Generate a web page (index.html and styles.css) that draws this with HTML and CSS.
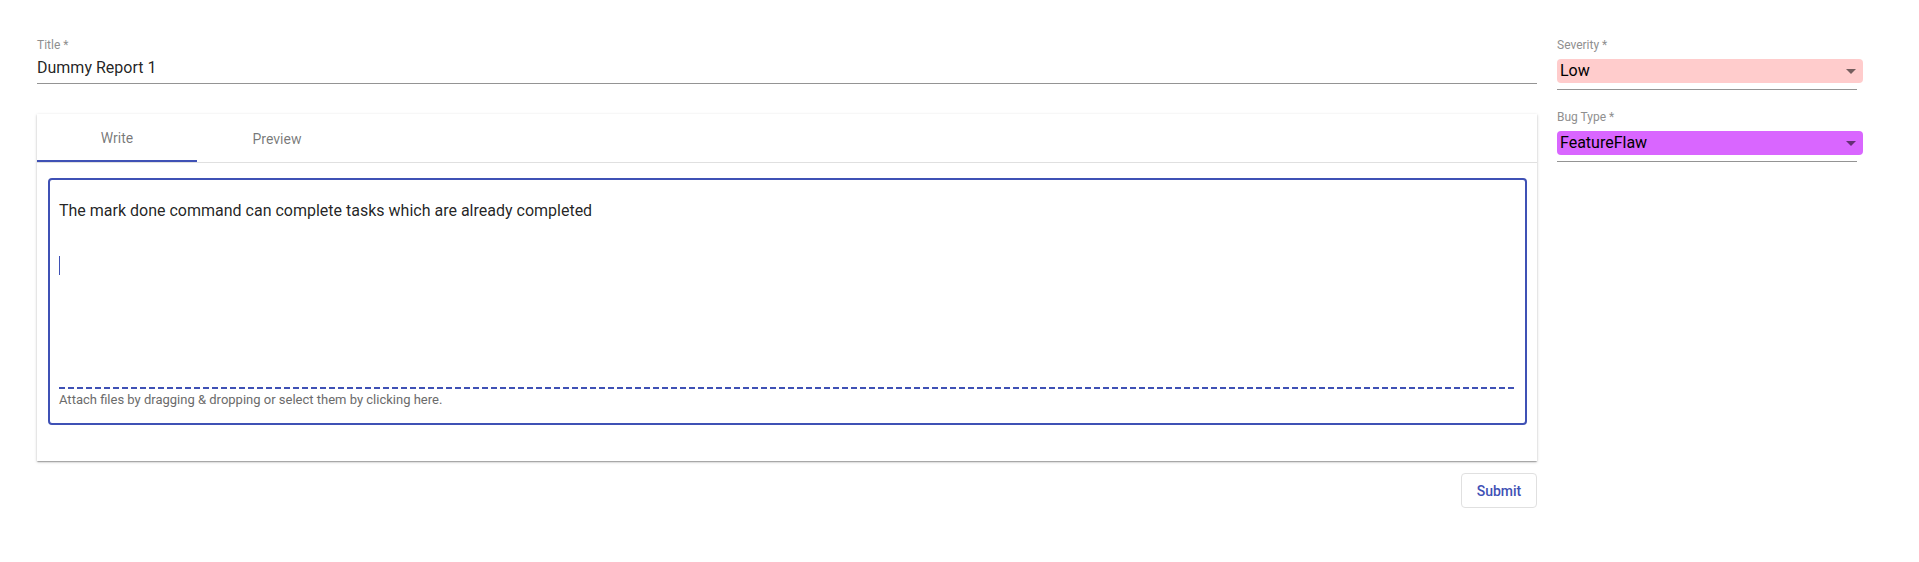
FILE: index.html
```html
<!DOCTYPE html>
<html lang="en">
<head>
<meta charset="utf-8">
<title>Report</title>
<link rel="stylesheet" href="styles.css">
</head>
<body>
<div class="page">
  <div class="main">
    <div class="field title-field">
      <label class="label">Title *</label>
      <div class="input">Dummy Report 1</div>
    </div>
    <div class="card">
      <div class="tabs">
        <div class="tab active">Write</div>
        <div class="tab">Preview</div>
      </div>
      <div class="editor">
        <div class="textarea">
          <div class="line">The mark done command can complete tasks which are already completed</div>
          <div class="line"></div>
          <div class="line"><span class="caret"></span></div>
        </div>
        <div class="dash"></div>
        <div class="attach">Attach files by dragging &amp; dropping or select them by clicking here.</div>
      </div>
    </div>
    <div class="actions">
      <button class="submit">Submit</button>
    </div>
  </div>
  <div class="side">
    <div class="field select-field">
      <label class="label">Severity *</label>
      <div class="select sev">
        <span>Low</span>
        <svg class="arrow" viewBox="0 0 24 24" width="24" height="24"><path d="M7 10l5 5 5-5z"/></svg>
      </div>
      <div class="underline"></div>
    </div>
    <div class="field select-field">
      <label class="label">Bug Type *</label>
      <div class="select bug">
        <span>FeatureFlaw</span>
        <svg class="arrow" viewBox="0 0 24 24" width="24" height="24"><path d="M7 10l5 5 5-5z"/></svg>
      </div>
      <div class="underline"></div>
    </div>
  </div>
</div>
</body>
</html>
```

FILE: styles.css
```css
html, body {
  margin: 0;
  padding: 0;
  background: #fff;
  font-family: Roboto, "Liberation Sans", Arial, sans-serif;
}

.page {
  display: flex;
  gap: 20px;
  padding: 38px 0 0 37px;
}

.main {
  width: 1500px;
  display: flex;
  flex-direction: column;
}

.label {
  display: block;
  font-size: 12px;
  line-height: 14px;
  color: #8f8f8f;
}

.input {
  font-size: 16px;
  line-height: 19px;
  color: rgba(0, 0, 0, 0.87);
  padding: 6px 0 6px;
  border-bottom: 1px solid #949494;
}

.card {
  margin-top: 30px;
  background: #fff;
  box-shadow: 0 1px 3px rgba(0, 0, 0, 0.2), 0 1px 1px rgba(0, 0, 0, 0.14), 0 2px 1px -1px rgba(0, 0, 0, 0.12);
  padding-bottom: 36px;
}

.tabs {
  display: flex;
  height: 48px;
  border-bottom: 1px solid #e0e0e0;
  box-sizing: content-box;
}

.tab {
  width: 160px;
  display: flex;
  align-items: center;
  justify-content: center;
  font-size: 14px;
  color: rgba(0, 0, 0, 0.54);
  box-sizing: border-box;
  padding-top: 1px;
}

.tab.active {
  border-bottom: 2px solid #3f51b5;
}

.editor {
  margin: 15px 10px 0 11px;
  border: 2px solid #3f51b5;
  border-radius: 4px;
  padding: 0 10px 16px 9px;
}

.textarea {
  height: 190px;
  padding-top: 17px;
  font-size: 16px;
  line-height: 27px;
  color: rgba(0, 0, 0, 0.87);
}

.line {
  height: 27px;
  display: flex;
  align-items: center;
}

.caret {
  display: block;
  width: 1px;
  height: 19px;
  background: #3f51b5;
  margin-top: 2px;
}

.dash {
  height: 2px;
  background: repeating-linear-gradient(90deg, #3f51b5 0 6px, transparent 6px 9px);
}

.attach {
  padding-top: 3px;
  font-size: 13px;
  line-height: 15px;
  color: #6b6b6b;
}

.actions {
  display: flex;
  justify-content: flex-end;
  margin-top: 12px;
}

.submit {
  width: 76px;
  height: 35px;
  background: #fff;
  border: 1px solid #e0e0e0;
  border-radius: 4px;
  font-family: Roboto, "Liberation Sans", Arial, sans-serif;
  font-size: 14px;
  font-weight: 500;
  color: #3f51b5;
  padding: 0;
}

.side {
  width: 300px;
  display: flex;
  flex-direction: column;
  gap: 20px;
}

.select {
  margin-top: 7px;
  width: 306px;
  height: 24px;
  border-radius: 4px;
  display: flex;
  align-items: center;
  justify-content: space-between;
  padding-left: 3px;
  box-sizing: border-box;
  font-size: 16px;
  line-height: 24px;
  color: #000;
}

.select.sev {
  background: #ffcccc;
}

.select.bug {
  background: #d966ff;
}

.arrow {
  fill: rgba(0, 0, 0, 0.54);
  flex: none;
}

.underline {
  margin-top: 6px;
  height: 1px;
  background: #949494;
}
```
